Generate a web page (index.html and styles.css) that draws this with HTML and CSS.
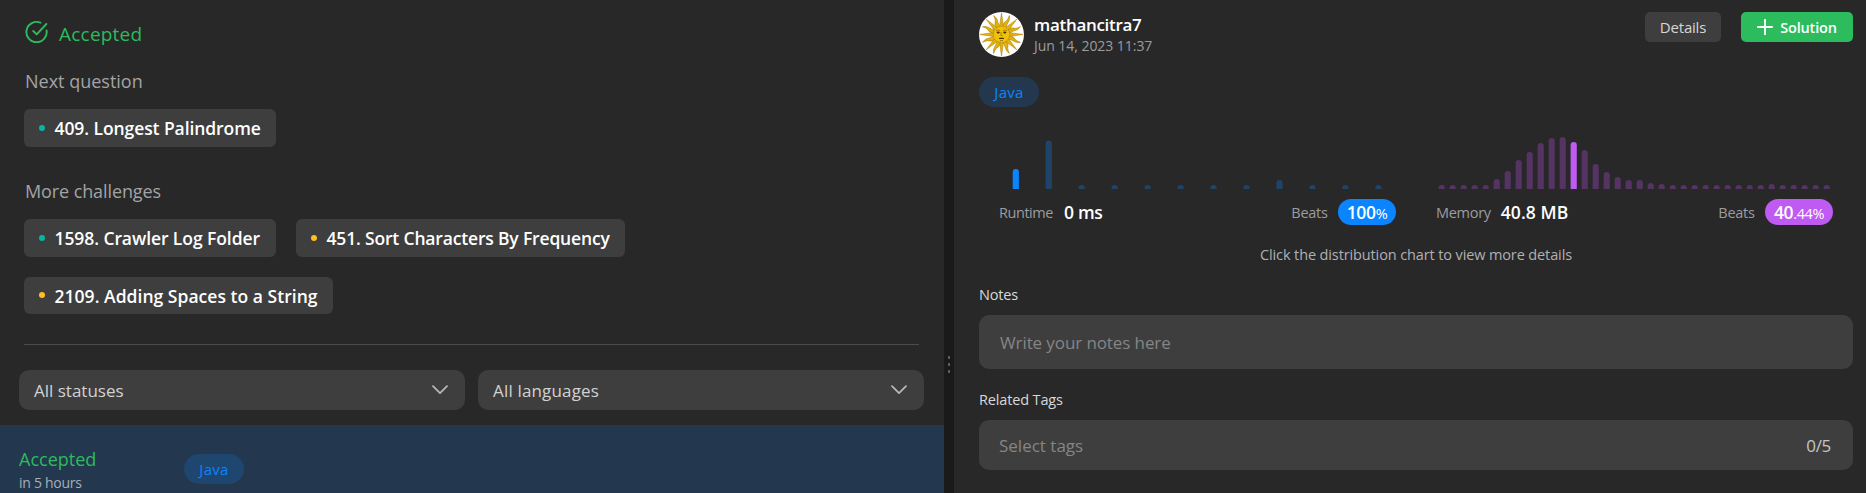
FILE: index.html
```
<!DOCTYPE html>
<html lang="en">
<head>
<meta charset="utf-8">
<title>Submission</title>
<link rel="stylesheet" href="styles.css">
</head>
<body>
<main class="app">
  <section class="left">
    <div class="result">
      <svg class="check" viewBox="0 0 24 24" fill="none" stroke="currentColor" stroke-width="2" stroke-linecap="round" stroke-linejoin="round"><path d="M16.1 2.8A10.6 10.6 0 1 0 22.5 10.8"/><path d="M8.6 11.5l3.6 3.5L22.3 4.2"/></svg>
      <h1 class="status">Accepted</h1>
    </div>
    <h2 class="heading">Next question</h2>
    <div class="chips">
      <a class="chip"><i class="dot easy"></i><span class="chip-text">409. Longest Palindrome</span></a>
    </div>
    <h2 class="heading more">More challenges</h2>
    <div class="chips">
      <a class="chip"><i class="dot easy"></i><span class="chip-text">1598. Crawler Log Folder</span></a>
      <a class="chip wide"><i class="dot medium"></i><span class="chip-text">451. Sort Characters By Frequency</span></a>
      <a class="chip adding"><i class="dot medium"></i><span class="chip-text">2109. Adding Spaces to a String</span></a>
    </div>
    <hr class="divider">
    <div class="filters">
      <div class="select"><span>All statuses</span><svg class="chevron" viewBox="0 0 16 10"><path d="M1 1.2l7 7 7-7"/></svg></div>
      <div class="select langs"><span>All languages</span><svg class="chevron" viewBox="0 0 16 10"><path d="M1 1.2l7 7 7-7"/></svg></div>
    </div>
    <div class="row">
      <div class="row-info"><div class="row-status">Accepted</div><div class="row-time">in 5 hours</div></div>
      <span class="pill on-row">Java</span>
    </div>
  </section>
  <div class="gutter"><i></i><i></i><i></i></div>
  <section class="right">
    <header class="head">
      <svg class="avatar" viewBox="0 0 45 45"><circle cx="22.5" cy="22.5" r="22.5" fill="#fff"/><g id="rays" fill="#e2b20c" stroke="#a87d08" stroke-width=".5"></g><circle cx="22.5" cy="22.5" r="8.2" fill="#f0c20c" stroke="#b58a10" stroke-width=".5"/><g fill="#4a3200"><ellipse cx="19.2" cy="20.6" rx="1.6" ry="1"/><ellipse cx="25.8" cy="20.6" rx="1.6" ry="1"/><rect x="20" y="25.8" width="5" height="1.3" rx=".6"/></g><path d="M17 18.8q2.2-1.6 4.2-.3M23.8 18.5q2-1.3 4.2.3M22 20v3.6h1.5M21 28.6h3" fill="none" stroke="#7a5504" stroke-width=".6"/></svg>
      <div class="who"><div class="name">mathancitra7</div><div class="date">Jun 14, 2023 11:37</div></div>
      <div class="actions">
        <button class="btn details">Details</button>
        <button class="btn solution"><svg class="plus" viewBox="0 0 16 16"><path d="M8 .8v14.4M.8 8h14.4"/></svg><span>Solution</span></button>
      </div>
    </header>
    <div class="tags"><span class="pill">Java</span></div>
    <div class="charts">
      <div class="chart runtime">
        <svg class="bars" id="runtime" viewBox="0 0 397 56"></svg>
        <div class="stat"><span class="label">Runtime</span><b class="value ms">0 ms</b><span class="label beats">Beats</span><span class="badge blue">100<small>%</small></span></div>
      </div>
      <div class="chart memory">
        <svg class="bars" id="memory" viewBox="0 0 397 56"></svg>
        <div class="stat"><span class="label mem">Memory</span><b class="value">40.8 MB</b><span class="label beats">Beats</span><span class="badge purple">40<small>.44%</small></span></div>
      </div>
    </div>
    <p class="hint">Click the distribution chart to view more details</p>
    <div class="field-label">Notes</div>
    <div class="field notes">Write your notes here</div>
    <div class="field-label related">Related Tags</div>
    <div class="field select-tags"><span>Select tags</span><span class="count">0/5</span></div>
  </section>
</main>
<script src="charts.js"></script>
</body>
</html>
```
FILE: styles.css
```
* { box-sizing: border-box; }
body { margin: 0; background: #282828; color: #fff; font-family: "Open Sans", "Noto Sans", sans-serif; }
h1, h2, p { margin: 0; font-weight: 500; }
.app { display: flex; height: 493px; overflow: hidden; }
.left { width: 944px; flex: none; padding-top: 20px; }
.result { display: flex; gap: 11px; height: 25px; padding-left: 25px; color: #2cbb5d; }
.check { width: 23px; height: 23px; flex: none; }
.status { font-size: 19px; line-height: 26px; padding-top: 1px; letter-spacing: .22px; }
.heading { margin: 24px 0 0 25px; font-size: 18px; line-height: 24px; color: #a3a3a6; }
.more { margin-top: 32px; letter-spacing: -.1px; }
.chips { display: flex; flex-wrap: wrap; gap: 20px; margin: 16px 0 0 24px; width: 800px; }
.chip { display: flex; align-items: center; width: 252px; height: 38px; padding-left: 15px; border-radius: 6px; background: #3e3e3e; font-size: 17.5px; font-weight: 600; letter-spacing: -.08px; white-space: nowrap; }
.wide { width: 329px; letter-spacing: -.17px; }
.adding { width: 309px; height: 37px; letter-spacing: .03px; }
.dot { width: 6px; height: 6px; border-radius: 50%; margin: -1px 9.5px 0 0; flex: none; }
.easy { background: #00b8a3; }
.medium { background: #ffc01e; }
.divider { height: 1px; margin: 30px 25px 0 24px; border: 0; background: #4b4b4b; }
.filters { display: flex; gap: 13px; padding: 25px 20px 15px 19px; }
.select { display: flex; flex: 1; justify-content: space-between; align-items: center; height: 40px; padding: 1px 17px 0 15px; border-radius: 10px; background: #3e3e3e; color: #d2d2d2; font-size: 17px; }
.langs { letter-spacing: .17px; }
.chevron { width: 16px; height: 10px; fill: none; stroke: #b8b8b8; stroke-width: 1.7; stroke-linecap: round; stroke-linejoin: round; margin-top: -1px; }
.row { display: flex; height: 90px; padding-left: 19px; background: #23384e; }
.row-info { width: 165px; padding-top: 22px; }
.row-status { font-size: 18px; line-height: 24px; font-weight: 500; color: #2cbb5d; }
.row-time { padding-top: 2px; font-size: 14px; line-height: 20px; letter-spacing: -.27px; color: #a7afb8; }
.pill { display: block; width: 60px; height: 30px; border-radius: 15px; background: #23384e; color: #0a84ff; font-size: 15px; font-weight: 500; line-height: 30px; text-align: center; letter-spacing: .3px; }
.on-row { margin-top: 29px; background: #1e466f; }
.gutter { width: 10px; flex: none; display: flex; flex-direction: column; align-items: center; gap: 4px; padding-top: 356px; background: #1a1a1a; }
.gutter i { width: 2px; height: 3px; background: #686868; border-radius: 1px; }
.right { flex: 1; padding: 12px 13px 0 25px; }
.head { display: flex; height: 45px; }
.avatar { width: 45px; height: 45px; flex: none; }
.who { margin-left: 10px; padding-top: 2px; }
.name { font-size: 17px; font-weight: 600; line-height: 22px; letter-spacing: -.3px; }
.date { font-size: 14px; line-height: 20px; letter-spacing: -.05px; color: #9c9ca0; }
.actions { display: flex; gap: 20px; margin-left: auto; }
.btn { display: flex; align-items: center; justify-content: center; height: 30px; border: 0; border-radius: 5px; padding: 0; font-family: inherit; }
.details { width: 76px; background: #3e3e3e; color: #d6d6d6; font-size: 15px; font-weight: 500; letter-spacing: -.2px; }
.solution { width: 112px; gap: 7px; background: #2cbb5d; color: #fff; font-size: 14.5px; font-weight: 600; letter-spacing: -.2px; }
.plus { width: 16px; height: 16px; fill: none; stroke: #fff; stroke-width: 1.9; stroke-linecap: round; }
.tags { padding-top: 20px; }
.charts { display: flex; gap: 40px; padding: 26px 20px 0; }
.chart { width: 397px; }
.bars { display: block; width: 397px; height: 56px; }
.stat { display: flex; align-items: center; height: 26px; margin-top: 10px; white-space: nowrap; }
.label { color: #9c9ca0; font-size: 14.5px; letter-spacing: -.45px; }
.mem { letter-spacing: -.3px; }
.value { margin-left: 11px; font-size: 17.5px; font-weight: 600; }
.mem + .value { margin-left: 10px; letter-spacing: .1px; }
.ms { letter-spacing: -.3px; }
.beats { margin-left: auto; letter-spacing: -.3px; }
.badge { display: flex; align-items: baseline; justify-content: center; height: 26px; margin-left: 10.5px; border-radius: 13px; font-size: 17.5px; font-weight: 600; line-height: 26px; letter-spacing: -.3px; }
.badge small { font-size: 14.5px; font-weight: 500; letter-spacing: -.4px; }
.blue { width: 58px; background: #0a84ff; }
.purple { width: 68px; background: #bf5af2; }
.hint { margin-top: 20px; text-align: center; font-size: 14.5px; font-weight: 400; line-height: 20px; letter-spacing: -.12px; color: #b0b0b3; }
.field-label { margin: 20px 0 10px; font-size: 14.5px; line-height: 20px; letter-spacing: -.15px; color: #d8d8d8; }
.field { display: flex; align-items: center; justify-content: space-between; padding: 0 22px 0 20px; border-radius: 10px; background: #3e3e3e; color: #858585; font-size: 17px; }
.notes { height: 54px; padding-left: 21px; letter-spacing: -.1px; }
.related { margin-top: 21px; }
.select-tags { height: 50px; }
.count { color: #c6c6c6; letter-spacing: -.3px; }
```
FILE: charts.js
```
// One bar: rounded top, flat base.
function bar(x, h, w, color) {
  const base = 56, r = Math.min(w / 2, h), top = base - h;
  return `<path fill="${color}" d="M${x - w / 2} ${base}V${top + r}A${w / 2} ${r} 0 0 1 ${x + w / 2} ${top + r}V${base}z"/>`;
}
function draw(id, values, first, step, active, colors) {
  document.getElementById(id).innerHTML = values
    .map((v, i) => bar(first + i * step, v, 6.2, i === active ? colors[1] : colors[0])).join('');
}
draw('runtime', [20, 48.5, 4, 4, 4, 4, 4, 4, 9, 4, 4, 4], 16.8, 32.96, 0, ['#1f4468', '#0a84ff']);
draw('memory', [4, 4, 4, 4, 4, 10, 18, 29, 37, 46, 51, 52, 47, 39, 25, 17, 12, 9, 9, 6, 5, 4, 4, 4, 4, 4, 4, 4, 4, 4, 5, 4, 4, 4, 4, 4], 5.7, 11, 12, ['#553362', '#bf5af2']);

// Sun rays around the avatar's face.
let rays = '';
for (let i = 0; i < 16; i++) {
  const d = i % 2 ? 'M20.6 14.6Q19.5 10 22 7.5Q22.8 5 22.5 2Q25 6 24 9Q23.4 11.5 24.4 14.6z' : 'M20.5 14.8L22.5 .8L24.5 14.8z';
  rays += `<path transform="rotate(${i * 22.5} 22.5 22.5)" d="${d}"/>`;
}
document.getElementById('rays').innerHTML = rays;
```
